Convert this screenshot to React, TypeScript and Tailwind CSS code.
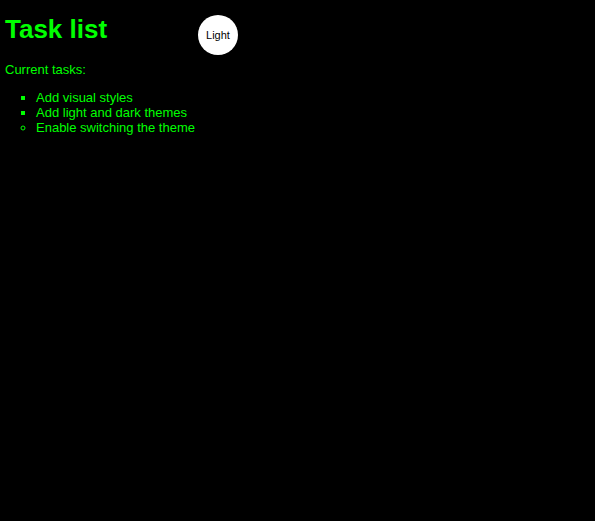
export default function App() {
  const tasks = [
    { text: 'Add visual styles', done: true },
    { text: 'Add light and dark themes', done: true },
    { text: 'Enable switching the theme', done: false },
  ];

  return (
    <div className="min-h-screen bg-black px-[5px] text-[13px] leading-[15px] text-[#00ff00] font-['Liberation_Sans',Arial,sans-serif]">
      <header className="flex items-start">
        <h1 className="mt-[15px] w-[193px] text-[26px] leading-[29px] font-bold">Task list</h1>
        <button className="mt-[15px] flex h-10 w-10 items-center justify-center rounded-full bg-white text-[11px] text-black">
          Light
        </button>
      </header>
      <p className="mt-[7px]">Current tasks:</p>
      <ul className="mt-[13px] pl-[31px]">
        {tasks.map((t) => (
          <li key={t.text} className={t.done ? 'list-[square]' : 'list-[circle]'}>
            {t.text}
          </li>
        ))}
      </ul>
    </div>
  );
}
